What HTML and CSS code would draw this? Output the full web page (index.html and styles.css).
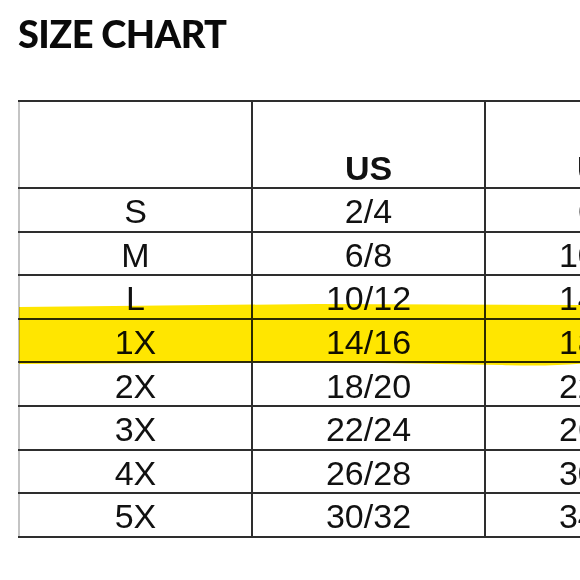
FILE: index.html
```html
<!DOCTYPE html>
<html>
<head>
<meta charset="utf-8">
<link rel="stylesheet" href="styles.css">
</head>
<body>
<div class="page">
  <h1 class="title">SIZE CHART</h1>
  <div class="chart">
    <table class="sizes">
      <thead>
        <tr><th></th><th>US</th><th>UK</th></tr>
      </thead>
      <tbody>
        <tr><td>S</td><td>2/4</td><td>6/8</td></tr>
        <tr><td>M</td><td>6/8</td><td>10/12</td></tr>
        <tr><td>L</td><td>10/12</td><td>14/16</td></tr>
        <tr><td>1X</td><td>14/16</td><td>18/20</td></tr>
        <tr><td>2X</td><td>18/20</td><td>22/24</td></tr>
        <tr><td>3X</td><td>22/24</td><td>26/28</td></tr>
        <tr><td>4X</td><td>26/28</td><td>30/32</td></tr>
        <tr><td>5X</td><td>30/32</td><td>34/36</td></tr>
      </tbody>
    </table>
    <svg class="marker" width="580" height="80" viewBox="0 0 580 80">
      <path d="M1,9 L300,6 L580,7 L580,64 Q540,69 484,67 L300,64 L1,66 Z" fill="#ffe600"/>
    </svg>
  </div>
</div>
</body>
</html>
```
FILE: styles.css
```css
html, body {
  margin: 0;
  padding: 0;
  background: #fff;
  overflow: hidden;
}
.page {
  width: 580px;
  height: 580px;
  overflow: hidden;
  padding: 14px 0 0 18px;
  box-sizing: border-box;
}
.title {
  margin: 0;
  font-family: Lato, "Liberation Sans", sans-serif;
  font-weight: 900;
  font-size: 38px;
  line-height: 39px;
  color: #0a0a0a;
  letter-spacing: -0.6px;
}
.chart {
  position: relative;
  margin-top: 47px;
  width: 720px;
}
.sizes {
  border-collapse: collapse;
  font-family: "Liberation Sans", Arial, sans-serif;
  color: #111;
  position: relative;
  z-index: 1;
}
.sizes th, .sizes td {
  width: 231px;
  border: 2px solid #2e2e2e;
  text-align: center;
  padding: 0;
  font-size: 34px;
  line-height: 34px;
}
.sizes th {
  height: 83px;
  vertical-align: bottom;
  font-weight: bold;
  padding-bottom: 2px;
}
.sizes td {
  height: 38.6px;
  vertical-align: middle;
  padding-top: 3px;
}
.sizes tr > :first-child {
  border-left: 2px solid #c4c4c4;
}
.marker {
  position: absolute;
  left: 0;
  top: 198px;
  z-index: 2;
  mix-blend-mode: multiply;
}
```
